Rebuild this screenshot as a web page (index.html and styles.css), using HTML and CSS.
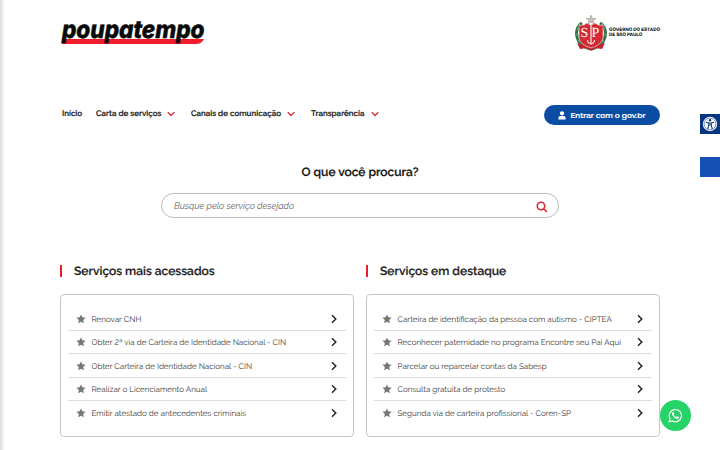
FILE: index.html
```html
<!DOCTYPE html>
<html lang="pt-BR">
<head>
    <meta charset="UTF-8">
    <meta name="viewport" content="width=device-width, initial-scale=1.0">
    <title>Poupatempo</title>
    <link rel="stylesheet" href="styles.css">
</head>
<body>
    <svg class="sprite" aria-hidden="true">
        <symbol id="star" viewBox="0 0 24 24">
            <path d="M12 1l3.300 7 7.700 1-5.700 5.300 1.500 7.700L12 18.300 5.200 22l1.500-7.700L1 9l7.700-1z"/>
        </symbol>
        <symbol id="right" viewBox="0 0 8 10">
            <path d="M2 1.300L5.800 5 2 8.700" fill="none" stroke="#222" stroke-width="1.450"/>
        </symbol>
        <symbol id="down" viewBox="0 0 8 6">
            <path d="M.7 1.200L4 4.500l3.300-3.300" fill="none" stroke="#dd2939" stroke-width="1.250"/>
        </symbol>
    </svg>

    <div class="container">
        <header class="header">
            <svg class="logo" viewBox="0 0 146 28" role="img">
                <path d="M3 20H144L143 21.500Q140.500 25 136 25H1.600Z" fill="#ef1d2b"/>
                <text class="logo-text" x="2" y="19" textLength="142.500" lengthAdjust="spacingAndGlyphs">poupatempo</text>
            </svg>
            <div class="gov">
                <svg class="crest" viewBox="0 0 34 38">
                    <path d="M8 9Q1 14 3 23q2 9 13 12M26 9q7 5 5 14-2 9-13 12" fill="none" stroke="#34734a" stroke-width="3"/>
                    <path d="M5 9l2 5M3 14l3 3M2 20l4 2M4 27l4-1M29 9l-2 5M31 14l-3 3M32 20l-4 2M30 27l-4-1" stroke="#68a477" stroke-width="1.300"/>
                    <path d="M3 29l9 3 5 2 5-2 9-3-3 6-7-1-4 3-4-3-7 1z" fill="#c8202f"/>
                    <path d="M5 11q6 1 7-2l5 2 5-2q1 3 7 2v13q-1 7-12 10Q6 31 5 24z" fill="#d52935" stroke="#eee2d8" stroke-width=".6"/>
                    <path d="M17 1l1.300 3.500H22l-3 2 1.200 3.500L17 8l-3.200 2L15 6.500l-3-2h3.700z" fill="#c5c3bb" stroke="#777" stroke-width=".4"/>
                    <path d="M17 11v19M13.500 26q0 3 3.500 4 3.500-1 3.500-4" fill="none" stroke="#eee" stroke-width="1.200"/>
                    <text class="crest-text" x="6.500" y="23">S</text>
                    <text class="crest-text" x="17.500" y="23">P</text>
                </svg>
                <p class="gov-name">GOVERNO DO ESTADO<br>DE SÃO PAULO</p>
            </div>
        </header>

        <nav class="nav">
            <a class="nav-home">Início</a>
            <a class="nav-letter">Carta de serviços <svg><use href="#down"/></svg></a>
            <a class="nav-channels">Canais de comunicação <svg><use href="#down"/></svg></a>
            <a class="nav-open">Transparência <svg><use href="#down"/></svg></a>
            <button class="login">
                <svg viewBox="0 0 8 9"><circle cx="4" cy="2.300" r="2.100"/><path d="M.4 8.600V7q0-1.900 2-1.900h3.200q2 0 2 1.900v1.600z"/></svg>
                <span>Entrar com o gov.br</span>
            </button>
        </nav>

        <section class="search">
            <h1>O que você procura?</h1>
            <div class="search-box">
                <input type="text" placeholder="Busque pelo serviço desejado">
                <svg viewBox="0 0 12 12"><circle cx="5" cy="5" r="3.700"/><path d="M7.700 7.700L11 11"/></svg>
            </div>
        </section>

        <main class="services">
            <section>
                <h2>Serviços mais acessados</h2>
                <ul class="card">
                    <li><svg class="star"><use href="#star"/></svg><span>Renovar CNH</span><svg class="arrow"><use href="#right"/></svg></li>
                    <li><svg class="star"><use href="#star"/></svg><span>Obter 2ª via de Carteira de Identidade Nacional - CIN</span><svg class="arrow"><use href="#right"/></svg></li>
                    <li><svg class="star"><use href="#star"/></svg><span>Obter Carteira de Identidade Nacional - CIN</span><svg class="arrow"><use href="#right"/></svg></li>
                    <li><svg class="star"><use href="#star"/></svg><span>Realizar o Licenciamento Anual</span><svg class="arrow"><use href="#right"/></svg></li>
                    <li><svg class="star"><use href="#star"/></svg><span>Emitir atestado de antecedentes criminais</span><svg class="arrow"><use href="#right"/></svg></li>
                </ul>
            </section>
            <section>
                <h2>Serviços em destaque</h2>
                <ul class="card">
                    <li><svg class="star"><use href="#star"/></svg><span>Carteira de identificação da pessoa com autismo - CIPTEA</span><svg class="arrow"><use href="#right"/></svg></li>
                    <li><svg class="star"><use href="#star"/></svg><span>Reconhecer paternidade no programa Encontre seu Pai Aqui</span><svg class="arrow"><use href="#right"/></svg></li>
                    <li><svg class="star"><use href="#star"/></svg><span>Parcelar ou reparcelar contas da Sabesp</span><svg class="arrow"><use href="#right"/></svg></li>
                    <li><svg class="star"><use href="#star"/></svg><span>Consulta gratuita de protesto</span><svg class="arrow"><use href="#right"/></svg></li>
                    <li><svg class="star"><use href="#star"/></svg><span>Segunda via de carteira profissional - Coren-SP</span><svg class="arrow"><use href="#right"/></svg></li>
                </ul>
            </section>
        </main>
    </div>

    <div class="side-shadow"></div>
    <div class="accessibility">
        <svg viewBox="0 0 16 16">
            <circle cx="8" cy="8" r="7.200" fill="#fff"/>
            <circle cx="8" cy="8" r="5.900" fill="none" stroke="#164795" stroke-width=".6"/>
            <circle cx="8" cy="4.200" r="1.200" fill="#12367c"/>
            <path d="M4 6.300l2.700.7v2L5.800 13M12 6.300L9.300 7v2l.9 4M6.700 7h2.600v2H6.700z" fill="none" stroke="#12367c" stroke-width="1.100"/>
        </svg>
    </div>
    <div class="vlibras"></div>
    <a class="whatsapp">
        <svg viewBox="0 0 16 16">
            <path d="M1.200 14.800l1-3.500A6.500 6.500 0 1 1 4.700 13.800z" fill="none" stroke="#fff" stroke-width="1.300"/>
            <path d="M5.500 4.200q-.4-.2-.8.3Q3.500 6 5 8.200q2 3 4.600 3.500 1.800.1 2.200-1.500.1-.5-.3-.7l-1.400-.7q-.4-.2-.7.2l-.6.700Q7 9 6.100 7.200l.5-.7q.2-.3 0-.7z" fill="#fff"/>
        </svg>
    </a>
</body>
</html>
```
FILE: styles.css
```css
* {
    margin: 0;
    padding: 0;
    box-sizing: border-box;
}

body {
    height: 450px;
    overflow: hidden;
    background: #fff;
    color: #222;
    font-family: Raleway, Lato, sans-serif;
    font-variant-numeric: lining-nums;
    text-rendering: geometricPrecision;
}

svg {
    display: block;
    flex-shrink: 0;
}

.sprite {
    display: none;
}

.container {
    width: 600px;
    margin: 0 auto;
}

/* Header */
.header {
    display: flex;
    justify-content: space-between;
    height: 104px;
    padding-top: 14px;
}

.logo {
    width: 146px;
    height: 28px;
    margin-top: 5px;
    overflow: visible;
}

.logo-text {
    font: italic 800 24.500px Inter, sans-serif;
    fill: #080808;
    stroke: #080808;
    stroke-width: .5px;
}

.gov {
    display: flex;
    gap: 1px;
}

.crest {
    width: 34px;
    height: 38px;
}

.crest-text {
    font: 14px "Liberation Serif", serif;
    fill: #fff;
}

.gov-name {
    width: 51px;
    padding-top: 14px;
    font: 800 4.600px/5px Inter, sans-serif;
    white-space: nowrap;
}

/* Navigation */
.nav {
    display: flex;
    align-items: flex-start;
    height: 21px;
    padding-left: 2px;
    font-size: 8px;
    font-weight: 600;
    -webkit-text-stroke: .2px;
}

.nav a {
    display: flex;
    align-items: center;
    justify-content: space-between;
    height: 18px;
    white-space: nowrap;
}

.nav a svg {
    width: 8px;
    height: 6px;
    margin-top: 2px;
}

.nav .nav-home {
    width: 34px;
}

.nav .nav-letter {
    width: 79px;
    margin-right: 16px;
}

.nav .nav-channels {
    width: 104px;
    margin-right: 16px;
}

.nav .nav-open {
    width: 68px;
}

.login {
    display: flex;
    align-items: center;
    justify-content: center;
    gap: 4px;
    width: 116px;
    height: 20px;
    margin-top: 1px;
    margin-left: auto;
    border: 0;
    border-radius: 10px;
    background: #0b4da2;
    color: #fff;
    font: inherit;
    font-size: 8.200px;
    white-space: nowrap;
}

.login svg {
    width: 8px;
    height: 9px;
    fill: #fff;
}

/* Search */
.search {
    width: 398px;
    margin: 0 auto;
    padding-top: 38px;
}

.search h1 {
    height: 18px;
    color: #111;
    font-size: 12px;
    font-weight: 600;
    line-height: 18px;
    text-align: center;
    -webkit-text-stroke: .2px;
}

.search-box {
    display: flex;
    align-items: center;
    height: 25px;
    margin-top: 12px;
    padding: 0 10px 0 12px;
    border: 1px solid #bbb;
    border-radius: 13px;
}

.search-box input {
    flex: 1;
    border: 0;
    outline: 0;
    background: none;
    font: italic 9px Raleway, Lato, sans-serif;
}

.search-box input::placeholder {
    color: #666;
}

.search-box svg {
    width: 12px;
    height: 12px;
    margin-top: 2px;
    fill: none;
    stroke: #d82838;
    stroke-width: 1.600;
}

/* Services */
.services {
    display: grid;
    grid-template-columns: 1fr 1fr;
    gap: 12px;
    padding-top: 47px;
}

.services h2 {
    display: flex;
    align-items: center;
    gap: 12px;
    height: 12px;
    font-size: 12px;
    font-weight: 600;
    line-height: 14px;
    white-space: nowrap;
    -webkit-text-stroke: .2px;
}

.services h2::before {
    content: "";
    width: 2px;
    height: 12px;
    background: #ed1c2b;
}

.card {
    height: 143px;
    margin-top: 17px;
    padding: 12px 7px;
    border: 1px solid #c7c7c7;
    border-radius: 4px;
    list-style: none;
}

.card li {
    display: flex;
    align-items: center;
    height: 23.500px;
    padding: .500px 8px 0;
    border-bottom: 1px solid #ddd;
    color: #3a3a3a;
    font-size: 8px;
    white-space: nowrap;
}

.card li:last-child {
    border-bottom: 0;
}

.star {
    width: 10px;
    height: 10px;
    margin-right: 5.500px;
    fill: #777;
}

.arrow {
    width: 8px;
    height: 10px;
    margin-left: auto;
}

/* Floating items */
.side-shadow {
    position: absolute;
    top: 0;
    left: 0;
    width: 5px;
    height: 450px;
    background: linear-gradient(to right, #ddd, #fff);
}

.accessibility,
.vlibras {
    position: absolute;
    right: 0;
    width: 20px;
    height: 20px;
}

.accessibility {
    top: 114px;
    padding: 2px;
    background: #083581;
}

.accessibility svg {
    width: 16px;
    height: 16px;
}

.vlibras {
    top: 157px;
    background: #1550b5;
}

.whatsapp {
    position: absolute;
    top: 400px;
    left: 660px;
    display: flex;
    align-items: center;
    justify-content: center;
    width: 31px;
    height: 31px;
    border-radius: 50%;
    background: #25d366;
}

.whatsapp svg {
    width: 15px;
    height: 15px;
}
```
